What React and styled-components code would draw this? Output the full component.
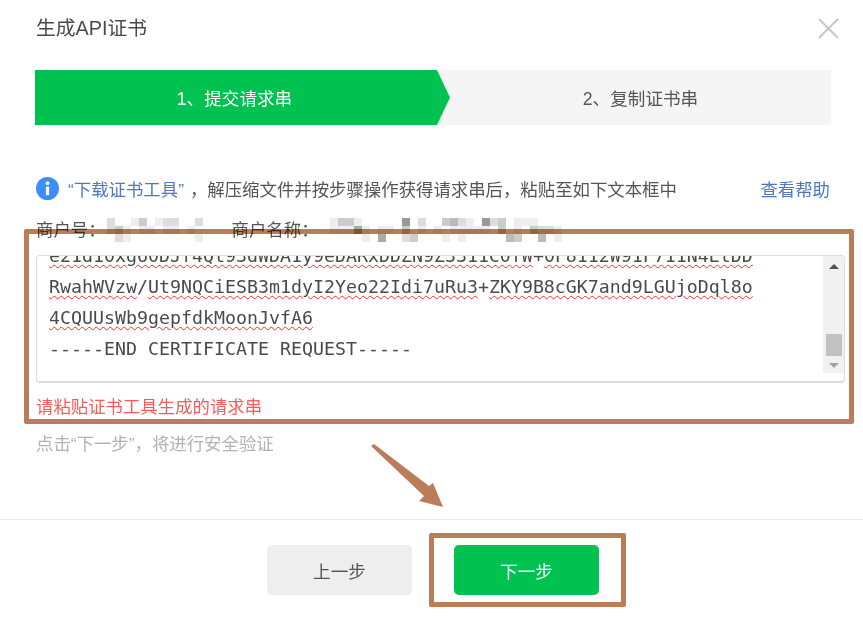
import React from "react"
import styled, { createGlobalStyle } from "styled-components"

const GlobalStyle = createGlobalStyle`
  html, body {
    margin: 0;
    background: #fff;
  }
  body {
    font-family: "Liberation Sans", "Noto Sans CJK SC", sans-serif;
    overflow: hidden;
  }
`

const Dialog = styled.div`
  position: relative;
  width: 863px;
  height: 617px;
  overflow: hidden;
  display: flex;
  flex-direction: column;
  background: #fff;
  filter: blur(0.6px);
`
const Header = styled.div`
  height: 70px;
  padding: 0 24px 0 36px;
  display: flex;
  justify-content: space-between;
  align-items: flex-start;
  box-sizing: border-box;
`
const Title = styled.div`
  font-size: 19.8px;
  line-height: 57px;
  color: #4a4a4a;
`
const Close = styled.svg`
  width: 21px;
  height: 21px;
  margin-top: 18px;
`
const Steps = styled.div`
  height: 55px;
  margin: 0 32px 0 35px;
  display: flex;
  background: #f5f5f5;
`
const Step = styled.div`
  display: flex;
  align-items: center;
  justify-content: center;
  font-size: 17.6px;
  flex: ${(p) => (p.$active ? "0 0 415px" : "1")};
  padding-right: ${(p) => (p.$active ? "16px" : "0")};
  box-sizing: border-box;
  color: ${(p) => (p.$active ? "#fff" : "#555")};
  background: ${(p) => (p.$active ? "#00c250" : "transparent")};
  clip-path: ${(p) =>
    p.$active ? "polygon(0 0, 402px 0, 100% 50%, 402px 100%, 0 100%)" : "none"};
`
const InfoRow = styled.div`
  height: 26px;
  margin-top: 50px;
  padding: 0 33px 0 36px;
  display: flex;
  align-items: center;
  font-size: 17.4px;
  color: #555;
`
const InfoIcon = styled.svg`
  width: 23px;
  height: 23px;
  margin-right: 9px;
  flex: none;
`
const Link = styled.span`
  color: #4f78c0;
`
const InfoText = styled.span`
  margin-left: 6px;
`
const HelpLink = styled(Link)`
  margin-left: auto;
`
const MerchantRow = styled.div`
  height: 26px;
  margin-top: 14px;
  padding-left: 36px;
  display: flex;
  align-items: center;
  font-size: 17.4px;
  color: #555;
`
const Mosaic = styled.svg`
  flex: none;
  margin-top: 4px;
  margin-left: ${(p) => p.$left}px;
  margin-right: ${(p) => p.$right}px;
`
const TextBox = styled.div`
  height: 128px;
  margin: 14px 18px 0 36px;
  display: flex;
  box-sizing: border-box;
  border: 1px solid #dcdcdc;
  border-bottom-width: 2px;
  border-radius: 4px;
  overflow: hidden;
`
const TextBody = styled.div`
  flex: 1;
  overflow: hidden;
  padding-left: 12px;
  font-family: "DejaVu Sans Mono", "Liberation Mono", monospace;
  font-size: 18.27px;
  color: #4a4a4a;
`
const CertLine = styled.div`
  height: 31px;
  line-height: 31px;
  white-space: pre;
  &:first-child {
    margin-top: -16px;
  }
`
const Typo = styled.span`
  text-decoration: underline wavy #ff2a2a 1.4px;
  text-underline-offset: 2px;
`
const Scrollbar = styled.div`
  flex: 0 0 21px;
  height: 117px;
  display: flex;
  flex-direction: column;
  align-items: center;
  background: #f1f1f1;
`
const ArrowUp = styled.div`
  width: 0;
  height: 0;
  margin-top: 8px;
  border-left: 5px solid transparent;
  border-right: 5px solid transparent;
  border-bottom: 5px solid #505050;
`
const Thumb = styled.div`
  width: 16px;
  height: 22px;
  margin-top: auto;
  background: #c1c1c1;
`
const ArrowDown = styled.div`
  width: 0;
  height: 0;
  margin: 7px 0 5px;
  border-left: 5px solid transparent;
  border-right: 5px solid transparent;
  border-top: 5px solid #a3a3a3;
`
const ErrorText = styled.div`
  height: 24px;
  line-height: 24px;
  margin-top: 12px;
  padding-left: 36px;
  font-size: 17.4px;
  color: #fa5a5a;
`
const Hint = styled.div`
  height: 24px;
  line-height: 24px;
  margin-top: 13px;
  padding-left: 36px;
  font-size: 17.4px;
  color: #b2b2b2;
`
const Footer = styled.div`
  margin-top: 63px;
  padding: 25px 0 0 3px;
  border-top: 1px solid #e9e9e9;
  display: flex;
  justify-content: center;
  gap: 42px;
`
const Button = styled.div`
  width: 145px;
  height: 50px;
  display: flex;
  align-items: center;
  justify-content: center;
  border-radius: 5px;
  font-size: 17.6px;
  color: ${(p) => (p.$primary ? "#fff" : "#555")};
  background: ${(p) => (p.$primary ? "#00c250" : "#eeeeee")};
`
// brown annotation frames drawn on top of the screenshot
const Frame = styled.div`
  position: absolute;
  left: ${(p) => p.$x}px;
  top: ${(p) => p.$y}px;
  width: ${(p) => p.$w}px;
  height: ${(p) => p.$h}px;
  box-sizing: border-box;
  border: 5px solid #bb7c5a;
  border-radius: 2px;
  mix-blend-mode: multiply;
`
const Arrow = styled.svg`
  position: absolute;
  left: 365px;
  top: 440px;
  width: 90px;
  height: 75px;
`

const MOSAIC_SHORT = ["dffecfeddffd", "dcefeefeefef", "fdeffffffffe"]
const MOSAIC_LONG = [
  "eccefffff9fdffcbdef9dcfeeefff",
  "eeeaefeefcfefefeeeeefcfefcdde",
  "ffffefaffdcfffefefffffbcffbfe",
]

const Pixels = ({ rows, left, right }) => (
  <Mosaic
    $left={left}
    $right={right}
    width={rows[0].length * 8}
    height={24}
    viewBox={`0 0 ${rows[0].length * 8} 24`}
  >
    {rows.map((row, y) =>
      row.split("").map((c, x) => (
        <rect
          key={`${x}-${y}`}
          x={x * 8}
          y={y * 8}
          width="8"
          height="8"
          fill={`#${c}${c}${c}`}
        />
      ))
    )}
  </Mosaic>
)

const App = () => {
  return (
    <Dialog>
      <GlobalStyle />
      <Header>
        <Title>生成API证书</Title>
        <Close viewBox="0 0 21 21">
          <path d="M1 1L20 20M20 1L1 20" stroke="#c6c6c6" strokeWidth="1.8" fill="none" />
        </Close>
      </Header>
      <Steps>
        <Step $active>1、提交请求串</Step>
        <Step>2、复制证书串</Step>
      </Steps>
      <InfoRow>
        <InfoIcon viewBox="0 0 23 23">
          <circle cx="11.5" cy="11.5" r="11.5" fill="#3f8cff" />
          <circle cx="11.5" cy="6.2" r="1.9" fill="#fff" />
          <rect x="9.9" y="9.6" width="3.2" height="8.6" fill="#fff" />
        </InfoIcon>
        <Link>“下载证书工具”</Link>
        <InfoText>，解压缩文件并按步骤操作获得请求串后，粘贴至如下文本框中</InfoText>
        <HelpLink>查看帮助</HelpLink>
      </InfoRow>
      <MerchantRow>
        <span>商户号：</span>
        <Pixels rows={MOSAIC_SHORT} left={1} right={29} />
        <span>商户名称：</span>
        <Pixels rows={MOSAIC_LONG} left={11} right={0} />
      </MerchantRow>
      <TextBox>
        <TextBody>
          <CertLine>
            <Typo>e21d10xg60DJf4Qt93dWDA1y9eDARxDDZN9Z3311C0fW</Typo>+<Typo>0F8112W91F711N4EtDD</Typo>
          </CertLine>
          <CertLine>
            <Typo>RwahWVzw</Typo>/<Typo>Ut9NQCiESB3m1dyI2Yeo22Idi7uRu3</Typo>+<Typo>ZKY9B8cGK7and9LGUjoDql8o</Typo>
          </CertLine>
          <CertLine>
            <Typo>4CQUUsWb9gepfdkMoonJvfA6</Typo>
          </CertLine>
          <CertLine>-----END CERTIFICATE REQUEST-----</CertLine>
        </TextBody>
        <Scrollbar>
          <ArrowUp />
          <Thumb />
          <ArrowDown />
        </Scrollbar>
      </TextBox>
      <ErrorText>请粘贴证书工具生成的请求串</ErrorText>
      <Hint>点击“下一步”，将进行安全验证</Hint>
      <Footer>
        <Button>上一步</Button>
        <Button $primary>下一步</Button>
      </Footer>
      <Frame $x={24} $y={229} $w={830} $h={195} />
      <Frame $x={429} $y={533} $w={197} $h={74} />
      <Arrow viewBox="0 0 90 75">
        <path d="M6 6L9 4L64 46L68 43L78 67L54 61L59 56Z" fill="#bb7c5a" />
      </Arrow>
    </Dialog>
  )
}

export default App
